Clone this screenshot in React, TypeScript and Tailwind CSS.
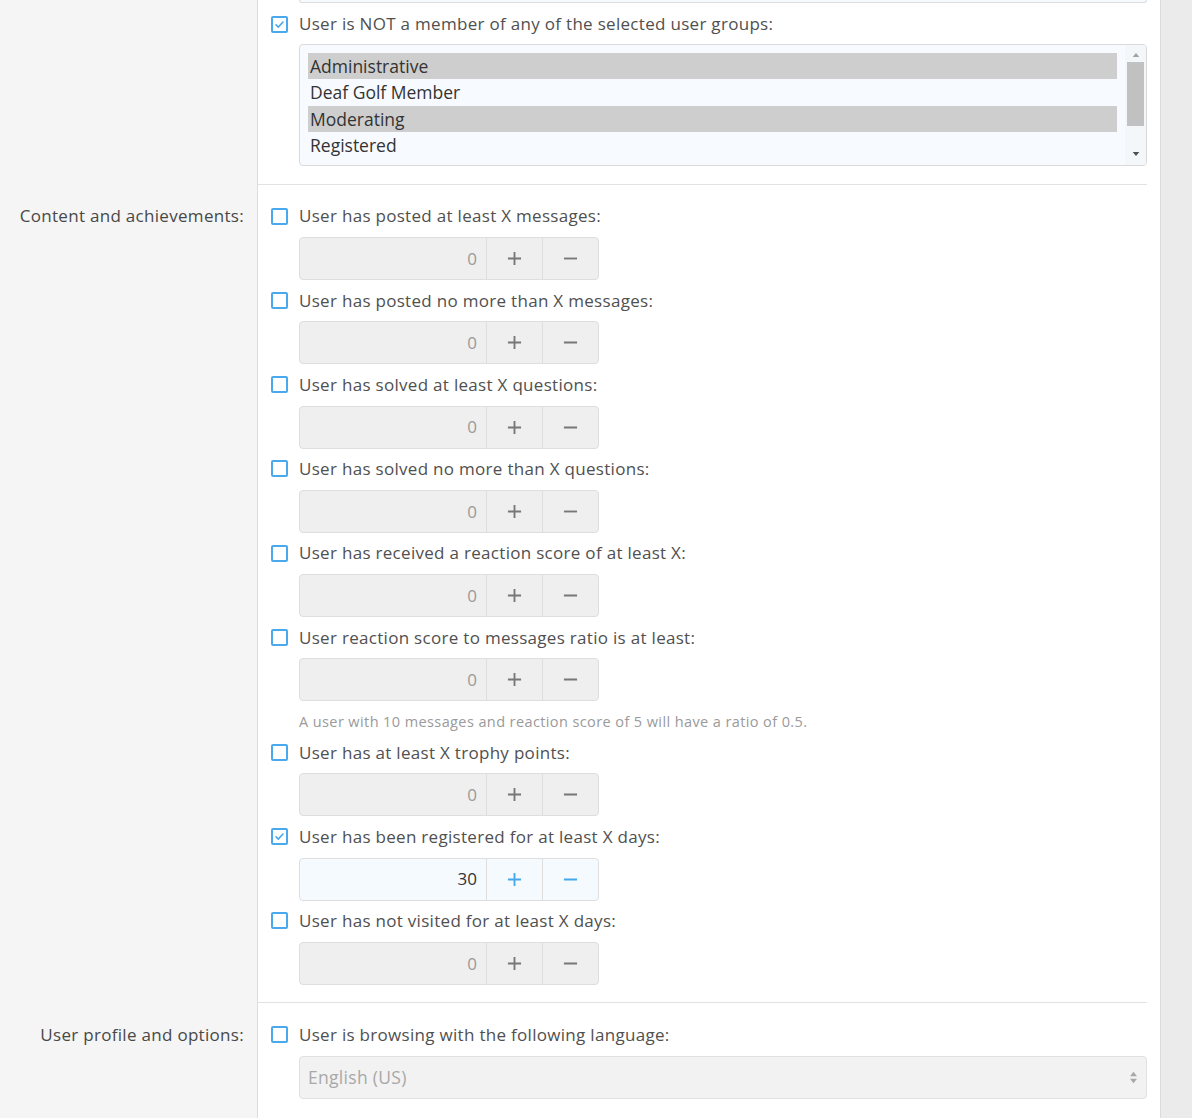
import { useState } from 'react';

const font = { fontFamily: '"Open Sans", "Noto Sans", "Liberation Sans", sans-serif' };

type Item = { label: string; value: number; checked?: boolean; hint?: string };

const items: Item[] = [
  { label: 'User has posted at least X messages:', value: 0 },
  { label: 'User has posted no more than X messages:', value: 0 },
  { label: 'User has solved at least X questions:', value: 0 },
  { label: 'User has solved no more than X questions:', value: 0 },
  { label: 'User has received a reaction score of at least X:', value: 0 },
  {
    label: 'User reaction score to messages ratio is at least:',
    value: 0,
    hint: 'A user with 10 messages and reaction score of 5 will have a ratio of 0.5.',
  },
  { label: 'User has at least X trophy points:', value: 0 },
  { label: 'User has been registered for at least X days:', value: 30, checked: true },
  { label: 'User has not visited for at least X days:', value: 0 },
];

const groups = [
  { name: 'Administrative', selected: true },
  { name: 'Deaf Golf Member', selected: false },
  { name: 'Moderating', selected: true },
  { name: 'Registered', selected: false },
  { name: 'Unregistered / Unconfirmed', selected: false },
];

function CheckBox({ checked, onChange }: { checked: boolean; onChange: () => void }) {
  return (
    <span
      onClick={onChange}
      className="flex h-[17px] w-[17px] shrink-0 cursor-pointer items-center justify-center rounded-[2px] border-2 border-[#4aa8ec] bg-white"
    >
      {checked && (
        <svg viewBox="0 0 12 12" className="h-[11px] w-[11px]" fill="none" stroke="#47a7eb" strokeWidth="1.8" strokeLinecap="round" strokeLinejoin="round">
          <path d="M2.2 6.3 L4.8 8.8 L9.8 3.3" />
        </svg>
      )}
    </span>
  );
}

function CheckRow({ label, checked, onChange }: { label: string; checked: boolean; onChange: () => void }) {
  return (
    <label className="flex h-6 items-center gap-[11px] text-[17px] tracking-[0.3px] text-[#505050]">
      <CheckBox checked={checked} onChange={onChange} />
      <span className="whitespace-nowrap">{label}</span>
    </label>
  );
}

function Stepper({ value, enabled }: { value: number; enabled: boolean }) {
  const box = enabled ? 'bg-[#f5faff] text-[#333]' : 'bg-[#efefef] text-[#9a9a9a]';
  const btn = enabled ? 'text-[#47a7eb]' : 'text-[#777]';
  return (
    <div className={`ml-7 flex h-[43px] w-[300px] overflow-hidden rounded-[4px] border border-[#dedede] ${box}`}>
      <div className="flex flex-1 items-center justify-end pr-[9px] text-[17px]">{value}</div>
      <div className={`flex w-[56px] items-center justify-center border-l border-[#dedede] ${btn}`}>
        <svg viewBox="0 0 16 16" className="h-[15px] w-[15px]" stroke="currentColor" strokeWidth="2">
          <path d="M8 1 V15 M1 8 H15" />
        </svg>
      </div>
      <div className={`flex w-[56px] items-center justify-center border-l border-[#dedede] ${btn}`}>
        <svg viewBox="0 0 16 16" className="h-[15px] w-[15px]" stroke="currentColor" strokeWidth="2">
          <path d="M1 8 H15" />
        </svg>
      </div>
    </div>
  );
}

function SideLabel({ text, top }: { text?: string; top: string }) {
  return (
    <div className={`w-[258px] shrink-0 border-r border-[#dcdcdc] bg-[#f5f5f5] ${top}`}>
      {text && (
        <div className="flex h-6 items-center justify-end whitespace-nowrap pr-[13px] text-[17px] tracking-[0.3px] text-[#484848]">
          {text}
        </div>
      )}
    </div>
  );
}

export default function App() {
  const [notMember, setNotMember] = useState(true);
  const [checks, setChecks] = useState(items.map((i) => !!i.checked));
  const [lang, setLang] = useState(false);

  return (
    <div className="flex min-h-[1118px] w-full overflow-hidden bg-white" style={font}>
      <div className="flex w-[1160px] shrink-0 flex-col">
        {/* user groups */}
        <div className="flex">
          <SideLabel top="" />
          <div className="flex-1 pr-[13px]">
            <div className="border-b border-[#e2e2e2] pb-[18px] pl-[13px]">
              <div className="ml-7 h-[3px] rounded-b-[4px] border-x border-b border-[#dedede] bg-[#f5faff]" />
              <div className="mt-[9px]">
                <CheckRow
                  label="User is NOT a member of any of the selected user groups:"
                  checked={notMember}
                  onChange={() => setNotMember(!notMember)}
                />
              </div>
              <div className="relative ml-7 mt-[8px] h-[122px] overflow-hidden rounded-[4px] border border-[#dadada] bg-[#f7fbff]">
                <div className="pl-2 pr-[29px] pt-2 text-[17.5px] text-[#333]">
                  {groups.map((g) => (
                    <div
                      key={g.name}
                      className={`flex h-[26.4px] items-center pl-[2px] ${g.selected ? 'bg-[#cecece]' : ''}`}
                    >
                      {g.name}
                    </div>
                  ))}
                </div>
                <div className="absolute right-0 top-0 flex h-full w-[21px] flex-col items-center bg-[#f4f7fa]">
                  <svg viewBox="0 0 10 6" className="mt-[8px] h-[4px] w-[8px]" fill="#a3a3a3">
                    <path d="M0 6 L5 0 L10 6 Z" />
                  </svg>
                  <div className="mt-[5px] h-[64px] w-[17px] bg-[#c1c1c1]" />
                  <svg viewBox="0 0 10 6" className="mt-auto mb-[9px] h-[4px] w-[8px]" fill="#505050">
                    <path d="M0 0 L10 0 L5 6 Z" />
                  </svg>
                </div>
              </div>
            </div>
          </div>
        </div>

        {/* content and achievements */}
        <div className="flex">
          <SideLabel text="Content and achievements:" top="pt-[19px]" />
          <div className="flex-1 pr-[13px]">
            <div className="border-b border-[#e2e2e2] pb-[17px] pl-[13px] pt-[19px]">
              {items.map((it, i) => (
                <div key={it.label} className={i === 0 ? '' : 'mt-[8.3px]'}>
                  <CheckRow
                    label={it.label}
                    checked={checks[i]}
                    onChange={() => setChecks(checks.map((c, j) => (j === i ? !c : c)))}
                  />
                  <div className="mt-[9px]">
                    <Stepper value={it.value} enabled={checks[i]} />
                  </div>
                  {it.hint && (
                    <div className="ml-7 mt-[10px] flex h-5 items-center whitespace-nowrap text-[14.5px] tracking-[0.4px] text-[#9a9a9a]">
                      {it.hint}
                    </div>
                  )}
                  {it.hint && <div className="h-[0.6px]" />}
                </div>
              ))}
            </div>
          </div>
        </div>

        {/* user profile */}
        <div className="flex flex-1">
          <SideLabel text="User profile and options:" top="pt-[20px]" />
          <div className="flex-1 pl-[13px] pr-[13px] pt-[20px]">
            <CheckRow label="User is browsing with the following language:" checked={lang} onChange={() => setLang(!lang)} />
            <div className="relative ml-7 mt-[9px] flex h-[43px] items-center rounded-[4px] border border-[#e0e0e0] bg-[#f2f2f2] pl-2 text-[17.5px] tracking-[0.3px] text-[#a8a8a8]">
              English (US)
              <svg viewBox="0 0 8 14" className="absolute right-[9px] top-[14px] h-[13px] w-[7px]" fill="#a8a8a8">
                <path d="M0 5.5 L4 0.5 L8 5.5 Z M0 8.5 L8 8.5 L4 13.5 Z" />
              </svg>
            </div>
          </div>
        </div>
      </div>
      <div className="flex-1 border-l border-[#dcdcdc] bg-[#ebebeb]" />
    </div>
  );
}
